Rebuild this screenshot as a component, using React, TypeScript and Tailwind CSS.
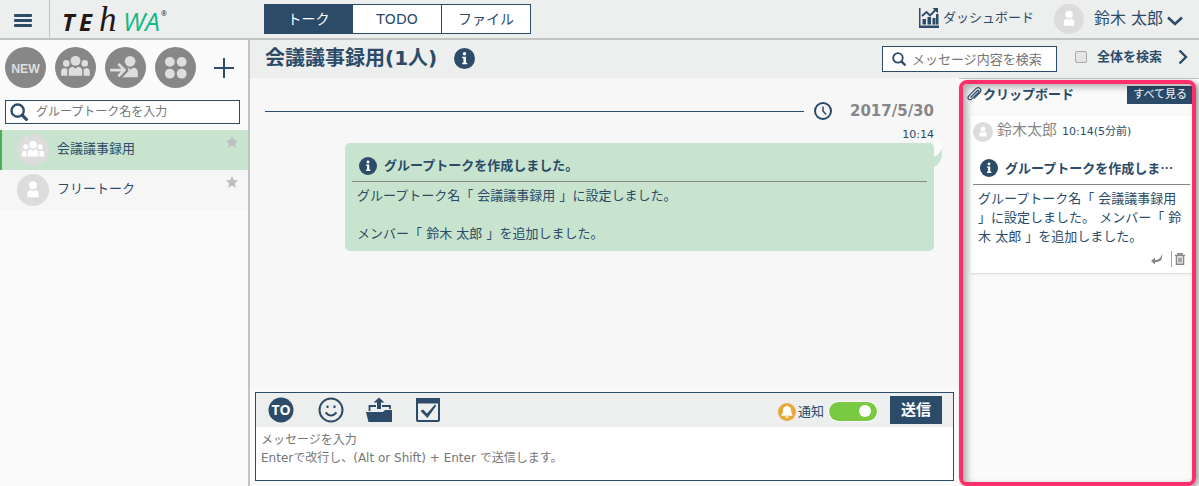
import type { ReactNode } from 'react';

const groups = [
  { id: 1, name: '会議議事録用', multi: true, active: true },
  { id: 2, name: 'フリートーク', multi: false, active: false },
];

const tabs = [
  { label: 'トーク', active: true },
  { label: 'TODO', active: false },
  { label: 'ファイル', active: false },
];

function PeopleShape() {
  return (
    <g fill="currentColor">
      <circle cx="20" cy="13.5" r="4.8" />
      <circle cx="11" cy="16" r="3.2" />
      <circle cx="29" cy="16" r="3.2" />
      <path d="M13.5 28v-4.5q0-4 4-4.3l2.5 2 2.5-2q4 .3 4 4.3V28z" />
      <path d="M6 28v-3.5q0-3.5 3-4l2 1 1.5-.6q-.5 1-.5 3V28zM34 28v-3.5q0-3.5-3-4l-2 1-1.5-.6q.5 1 .5 3V28z" />
    </g>
  );
}

function PersonShape() {
  return (
    <g fill="currentColor">
      <circle cx="20" cy="14" r="5" />
      <path d="M13 29v-4.5q0-4.3 4.5-4.8l2.5 2 2.5-2q4.5.5 4.5 4.8V29z" />
    </g>
  );
}

function Avatar({ multi, className }: { multi?: boolean; className: string }) {
  return (
    <svg viewBox="0 0 40 40" className={`shrink-0 text-white ${className}`}>
      <circle cx="20" cy="20" r="20" fill="#dcdcdc" />
      {multi ? <PeopleShape /> : <PersonShape />}
    </svg>
  );
}

function RoundButton({ label, children }: { label: string; children: ReactNode }) {
  return (
    <button aria-label={label} className="shrink-0 text-[#dedede]">
      <svg viewBox="0 0 40 40" className="size-[41px]">
        <circle cx="20" cy="20" r="20" fill="#878787" />
        {children}
      </svg>
    </button>
  );
}

function InfoIcon({ className }: { className: string }) {
  return (
    <svg viewBox="0 0 20 20" className={`shrink-0 ${className}`}>
      <circle cx="10" cy="10" r="10" fill="#2b4b68" />
      <circle cx="10" cy="5.5" r="1.6" fill="#fff" />
      <path d="M7.8 8.3h3.6v5.7h1.2v1.5H7.8V14H9V9.8H7.8z" fill="#fff" />
    </svg>
  );
}

function SearchIcon({ className }: { className: string }) {
  return (
    <svg viewBox="0 0 20 20" className={`shrink-0 ${className}`} fill="none" stroke="#2b4b68">
      <circle cx="8.5" cy="8.5" r="6.8" strokeWidth="2.6" />
      <path d="M13.5 13.5l4.7 4.7" strokeWidth="3.4" strokeLinecap="round" />
    </svg>
  );
}

function Star() {
  return (
    <svg viewBox="0 0 24 24" className="size-3" fill="#bdbfc1">
      <path d="M12 0l3.6 7.9 8.4 1-6.2 5.9 1.7 8.7L12 19.2l-7.5 4.3 1.7-8.7L0 8.9l8.4-1z" />
    </svg>
  );
}

function Logo() {
  return (
    <svg viewBox="0 0 120 38" className="h-[38px] w-[120px]" fontStyle="italic">
      <text x="8" y="31" fill="#231815" className="font-['Open_Sans',sans-serif] text-[24px] font-bold">
        T
      </text>
      <text x="25" y="31" fill="#231815" className="font-['Open_Sans',sans-serif] text-[24px] font-bold">
        E
      </text>
      <text x="45" y="31" fill="#231815" className="font-['Liberation_Serif',serif] text-[35px]">
        h
      </text>
      <text x="69" y="31" fill="#12b886" className="font-['Open_Sans',sans-serif] text-[26px]">
        WA
      </text>
      <text x="107" y="16" fill="#231815" fontStyle="normal" className="font-['Open_Sans',sans-serif] text-[7px]">
        ®
      </text>
    </svg>
  );
}

function Header() {
  return (
    <header className="flex h-10 shrink-0 items-center border-b-2 border-[#c2c3c3] bg-[#edeeee]">
      <button aria-label="メニュー" className="flex h-full w-[50px] shrink-0 items-center border-r border-[#c2c3c3] pt-0.5 pl-3.5">
        <svg viewBox="0 0 18 13" className="h-[13px] w-[18px]" fill="#2b4b68">
          <rect width="18" height="3" rx="1" />
          <rect y="5" width="18" height="3" rx="1" />
          <rect y="10" width="18" height="3" rx="1" />
        </svg>
      </button>
      <a href="#" className="h-full w-[214px] shrink-0 pl-1">
        <Logo />
      </a>
      <nav className="flex h-[30px] border border-[#2b4b68]">
        {tabs.map((tab) => (
          <button
            key={tab.label}
            className={`w-[89px] border-r border-[#2b4b68] text-sm first:w-[88px] last:w-[88px] last:border-r-0 ${tab.active ? 'bg-[#2b4b68] text-white' : 'bg-white'}`}
          >
            {tab.label}
          </button>
        ))}
      </nav>
      <div className="ml-auto flex items-center pr-4">
        <a href="#" className="flex items-center gap-1 pb-0.5 text-[13px]">
          <svg viewBox="0 0 20 20" className="size-5" fill="#2b4b68">
            <path d="M0 0h1.5v17.5H20V20H0z" />
            <path d="M3.5 11h3.5v5.5H3.5zM8.5 9H12v7.5H8.5zM13.5 10h3v6.5h-3zM17 6h2.5v10.5H17z" />
            <path d="M3 8l4.5-4 3.5 3.5 6-6" fill="none" stroke="#2b4b68" strokeWidth="1.8" />
            <path d="M13.5 0H19v5.5z" />
          </svg>
          ダッシュボード
        </a>
        <button className="ml-5 flex items-center text-base">
          <Avatar className="size-[30px]" />
          <span className="ml-2.5">鈴木 太郎</span>
          <svg viewBox="0 0 16 10" className="mt-1 ml-1 h-2.5 w-4" fill="none" stroke="#2b4b68" strokeWidth="2.5">
            <path d="M1 1.5l7 6.5 7-6.5" />
          </svg>
        </button>
      </div>
    </header>
  );
}

function Sidebar() {
  return (
    <aside className="w-[250px] shrink-0 border-r-2 border-[#c2c3c3] bg-[#fafafa]">
      <div className="flex items-center gap-[9px] pt-[7px] pl-[5px]">
        <RoundButton label="新規">
          <text x="20" y="25" textAnchor="middle" fill="currentColor" className="font-['Liberation_Sans',sans-serif] text-[12px] font-bold">
            NEW
          </text>
        </RoundButton>
        <RoundButton label="グループ">
          <PeopleShape />
        </RoundButton>
        <RoundButton label="参加">
          <g fill="currentColor">
            <circle cx="24.5" cy="14" r="5.2" />
            <path d="M22 20l3 2 3-2q4 1 4 5v4.5H17l6-6z" />
            <path d="M5 22.5h13M13 16.5l6 6-6 6" fill="none" stroke="currentColor" strokeWidth="2.6" />
          </g>
        </RoundButton>
        <RoundButton label="一覧">
          <g fill="currentColor">
            <circle cx="14.5" cy="14.5" r="4.8" />
            <circle cx="26" cy="14.5" r="4.8" />
            <circle cx="14.5" cy="26" r="4.8" />
            <circle cx="26" cy="26" r="4.8" />
          </g>
        </RoundButton>
        <button aria-label="追加" className="ml-2">
          <svg viewBox="0 0 22 22" className="size-[22px]" stroke="#2b4b68" strokeWidth="2">
            <path d="M11 1v20M1 11h20" />
          </svg>
        </button>
      </div>
      <label className="mt-3 mr-2 ml-[5px] flex h-6 items-center gap-2 border border-[#2b4b68] bg-white pl-1">
        <SearchIcon className="size-[18px]" />
        <input
          aria-label="グループトーク検索"
          placeholder="グループトーク名を入力"
          className="h-5 min-w-0 flex-1 text-xs outline-none placeholder:text-[#757575]"
        />
      </label>
      <ul className="mt-1.5">
        {groups.map((g) => (
          <li key={g.id}>
            <a
              href="#"
              className={`flex h-10 items-start border-l-2 pr-2.5 pl-[15px] ${g.active ? 'border-[#4fae55] bg-[#c9e4ce]' : 'border-[#f6f6f6] bg-[#f6f6f6]'}`}
            >
              <Avatar multi={g.multi} className="mt-1 size-8" />
              <span className="ml-2 flex-1 text-[13px] leading-[38px]">{g.name}</span>
              <span className="pt-1.5">
                <Star />
              </span>
            </a>
          </li>
        ))}
      </ul>
    </aside>
  );
}

function TitleBar() {
  return (
    <div className="flex h-[38px] shrink-0 items-center bg-[#edeeee] pr-[11px] pl-[15px]">
      <h1 className="pb-0.5 text-xl font-bold">会議議事録用(1人)</h1>
      <button aria-label="情報" className="ml-[17px] pb-0.5">
        <InfoIcon className="size-[21px]" />
      </button>
      <div className="ml-auto flex w-[175px] items-center gap-1.5 border border-[#2b4b68] bg-white pl-[9px]">
        <SearchIcon className="size-3.5" />
        <input
          aria-label="メッセージ検索"
          placeholder="メッセージ内容を検索"
          className="h-6 min-w-0 flex-1 text-[13px] outline-none placeholder:text-[#757575]"
        />
      </div>
      <label className="ml-[18px] flex items-center gap-2.5 pb-1 text-[13px] font-bold">
        <input type="checkbox" className="size-3 appearance-none rounded-xs border border-[#a9a9a9] bg-[#e4e4e4]" />
        全体を検索
      </label>
      <button aria-label="次へ" className="ml-4 pb-1">
        <svg viewBox="0 0 10 16" className="h-4 w-2.5" fill="none" stroke="#2b4b68" strokeWidth="2.4">
          <path d="M1.5 1.5L8 8l-6.5 6.5" />
        </svg>
      </button>
    </div>
  );
}

function Messages() {
  return (
    <section className="flex-1 bg-[#f7f7f7] pt-[23px] pr-[25px] pl-[15px]">
      <div className="flex items-center">
        <span className="h-px flex-1 bg-[#2b4b68]" />
        <svg viewBox="0 0 18 18" className="ml-2.5 size-[18px]" fill="none" stroke="#2b4b68" strokeWidth="2">
          <circle cx="9" cy="9" r="8" />
          <path d="M9 4.5V9l3 3.5" strokeWidth="1.5" />
        </svg>
        <time className="ml-[18px] text-[15px] leading-5 font-bold text-[#878787]">2017/5/30</time>
      </div>
      <p className="pt-1.5 text-right text-[11px] leading-4">10:14</p>
      <article className="relative ml-20 rounded-[5px] bg-[#c9e4ce] px-[7px] pt-[7px] pb-2">
        <svg viewBox="0 0 10 30" className="absolute -top-1.5 left-full h-[30px] w-2.5">
          <path d="M0 19q6-2 8-8v5q0 10-8 14z" fill="#c9e4ce" />
          <path d="M0 0q8 0 8 10-1 7-8 10z" fill="#fafafa" />
        </svg>
        <h2 className="flex h-8 items-center gap-[7px] border-b border-[#878787] pl-[7px] text-[13px] font-bold">
          <InfoIcon className="size-[18px]" />
          グループトークを作成しました。
        </h2>
        <p className="px-[5px] pt-1 text-[13px] leading-[19px]">
          グループトーク名「 会議議事録用 」に設定しました。
          <br />
          <br />
          メンバー「 鈴木 太郎 」を追加しました。
        </p>
      </article>
    </section>
  );
}

function Composer() {
  return (
    <form className="m-[5px] border border-[#2b4b68] bg-white">
      <div className="flex h-[34px] items-center bg-[#edeeee] pr-[11px] pl-3">
        <button type="button" aria-label="宛先">
          <svg viewBox="0 0 26 26" className="size-[26px]">
            <circle cx="13" cy="13" r="12.5" fill="#2b4b68" />
            <text x="13" y="18" textAnchor="middle" fill="#fff" className="font-['Open_Sans',sans-serif] text-[14px] font-bold">
              TO
            </text>
          </svg>
        </button>
        <button type="button" aria-label="絵文字" className="ml-6">
          <svg viewBox="0 0 26 26" className="size-[26px]" fill="none" stroke="#2b4b68" strokeWidth="2">
            <circle cx="13" cy="13" r="11.5" />
            <path d="M7.5 15.5q5.5 6 11 0" />
            <path d="M9.5 8.5v2.5M16.5 8.5v2.5" />
          </svg>
        </button>
        <button type="button" aria-label="ファイル添付" className="ml-[21px]">
          <svg viewBox="0 0 28 26" className="h-[26px] w-7" fill="#2b4b68">
            <path d="M1 15h17l2-2h7v12H3.5z" />
            <path d="M4.5 14V9H11M17 9h8v3" fill="none" stroke="#2b4b68" strokeWidth="1.8" />
            <path d="M14 .5l5.5 5H16V12h-4V5.5H8.5z" />
          </svg>
        </button>
        <button type="button" aria-label="タスク" className="ml-[23px]">
          <svg viewBox="0 0 24 24" className="size-6">
            <rect x="1" y="1" width="22" height="22" rx="1" fill="none" stroke="#2b4b68" strokeWidth="2" />
            <path d="M0 0h24v5.5H0z" fill="#2b4b68" />
            <path d="M4.5 13l2.5-1.5 4 4L19 6.5l1.2 1.2L11.5 20z" fill="#2b4b68" />
          </svg>
        </button>
        <label className="ml-auto flex items-center pt-1 text-[13px]">
          <svg viewBox="0 0 18 18" className="mr-0.5 size-[18px]">
            <circle cx="9" cy="9" r="9" fill="#e8a838" />
            <path d="M9 2.5q1 0 1.1 1.1 3 .7 3 4 0 3 1.4 4.4v.8h-11V12Q5 10.6 5 7.6q0-3.3 2.9-4 .1-1.1 1.1-1.1zM7.3 13.5h3.4q-.3 1.5-1.7 1.5t-1.7-1.5z" fill="#fff" />
          </svg>
          通知
          <input type="checkbox" defaultChecked className="peer sr-only" />
          <span className="mb-0.5 ml-[5px] flex h-[19px] w-12 items-center justify-end rounded-full bg-[#7ac943] pr-1.5 ring-1 ring-white">
            <span className="size-3 rounded-full bg-white" />
          </span>
        </label>
        <button type="submit" className="ml-[13px] h-7 w-[52px] bg-[#2b4b68] text-[15px] leading-7 font-bold text-white">
          送信
        </button>
      </div>
      <textarea
        aria-label="メッセージ"
        placeholder={'メッセージを入力\nEnterで改行し、(Alt or Shift) + Enter で送信します。'}
        className="block h-[53px] w-full resize-none px-[5px] pt-1 text-xs leading-[18px] outline-none placeholder:text-[#757575]"
      />
    </form>
  );
}

function Clipboard() {
  return (
    <aside className="relative w-60 shrink-0 border-t border-[#c2c3c3] bg-[#fafafa] pr-1.5 pl-[11px]">
      <div className="-ml-1 flex items-start pt-[7px]">
        <svg viewBox="0 0 16 16" className="mr-px size-4" fill="none" stroke="#2b4b68" strokeWidth="1.2">
          <path d="M4.5 11.5l6.5-6.5q1-1 1.7-.3t-.3 1.7l-6.3 6.3q-2 2-3.5.5t.3-3.3l6.5-6.7q2.5-2.5 4.5-.8t0 4.3l-6 6" />
        </svg>
        <h2 className="text-[13px] leading-[17px] font-bold">クリップボード</h2>
        <button className="ml-auto h-[18px] bg-[#2b4b68] px-1.5 text-[11px] leading-[18px] text-white">すべて見る</button>
      </div>
      <article className="mt-3 bg-white pb-1.5 shadow-sm">
        <div className="flex h-[30px] items-center pt-0.5 pl-[3px]">
          <Avatar className="size-5" />
          <span className="ml-1 pb-1 text-[15px] leading-6 text-[#878787]">鈴木太郎</span>
          <span className="ml-[5px] text-[11px]">10:14(5分前)</span>
        </div>
        <h3 className="mx-[3px] mt-1.5 flex h-[33px] items-center gap-[7px] border-b border-[#878787] pl-[7px] font-['Noto_Sans_CJK_JP',sans-serif] text-[13px] font-bold">
          <InfoIcon className="size-[18px]" />
          グループトークを作成しま…
        </h3>
        <p className="px-2 pt-1 text-[13px] leading-[19px]">
          グループトーク名「 会議議事録用<br />」に設定しました。 メンバー「 鈴<br />木 太郎 」を追加しました。
        </p>
        <div className="mt-[5px] flex items-center justify-end pr-2">
          <button aria-label="返信">
            <svg viewBox="0 0 12 12" className="size-3" fill="#878787">
              <path d="M0 8l4-3.5V7q5.5 0 7-6Q12.5 9 4 9.2v2.3z" />
            </svg>
          </button>
          <button aria-label="削除" className="ml-2 flex h-4 items-center border-l border-[#a5a5a5] pl-[3px]">
            <svg viewBox="0 0 10 12" className="h-3 w-2.5" fill="none" stroke="#878787" strokeWidth="1.5">
              <path d="M0 2.5h10M3 2V.7h4V2M1.5 3v8.3h7V3M4 4.5v5M6 4.5v5" />
            </svg>
          </button>
        </div>
      </article>
      {/* 注目枠 */}
      <div className="pointer-events-none absolute top-px right-[3px] bottom-0 left-0 rounded-lg border-4 border-[#fd2e6a] shadow-[3px_2px_5px_rgba(0,0,0,0.35),inset_4px_3px_7px_rgba(0,0,0,0.3)]" />
    </aside>
  );
}

export default function App() {
  return (
    <div className="flex h-screen flex-col overflow-hidden bg-[#fafafa] font-['DejaVu_Sans','Noto_Sans_CJK_JP',sans-serif] text-[#2b4b68]">
      <Header />
      <div className="flex min-h-0 flex-1">
        <Sidebar />
        <div className="flex min-w-0 flex-1 flex-col">
          <TitleBar />
          <div className="flex min-h-0 flex-1">
            <main className="flex min-w-0 flex-1 flex-col">
              <Messages />
              <Composer />
            </main>
            <Clipboard />
          </div>
        </div>
      </div>
    </div>
  );
}
